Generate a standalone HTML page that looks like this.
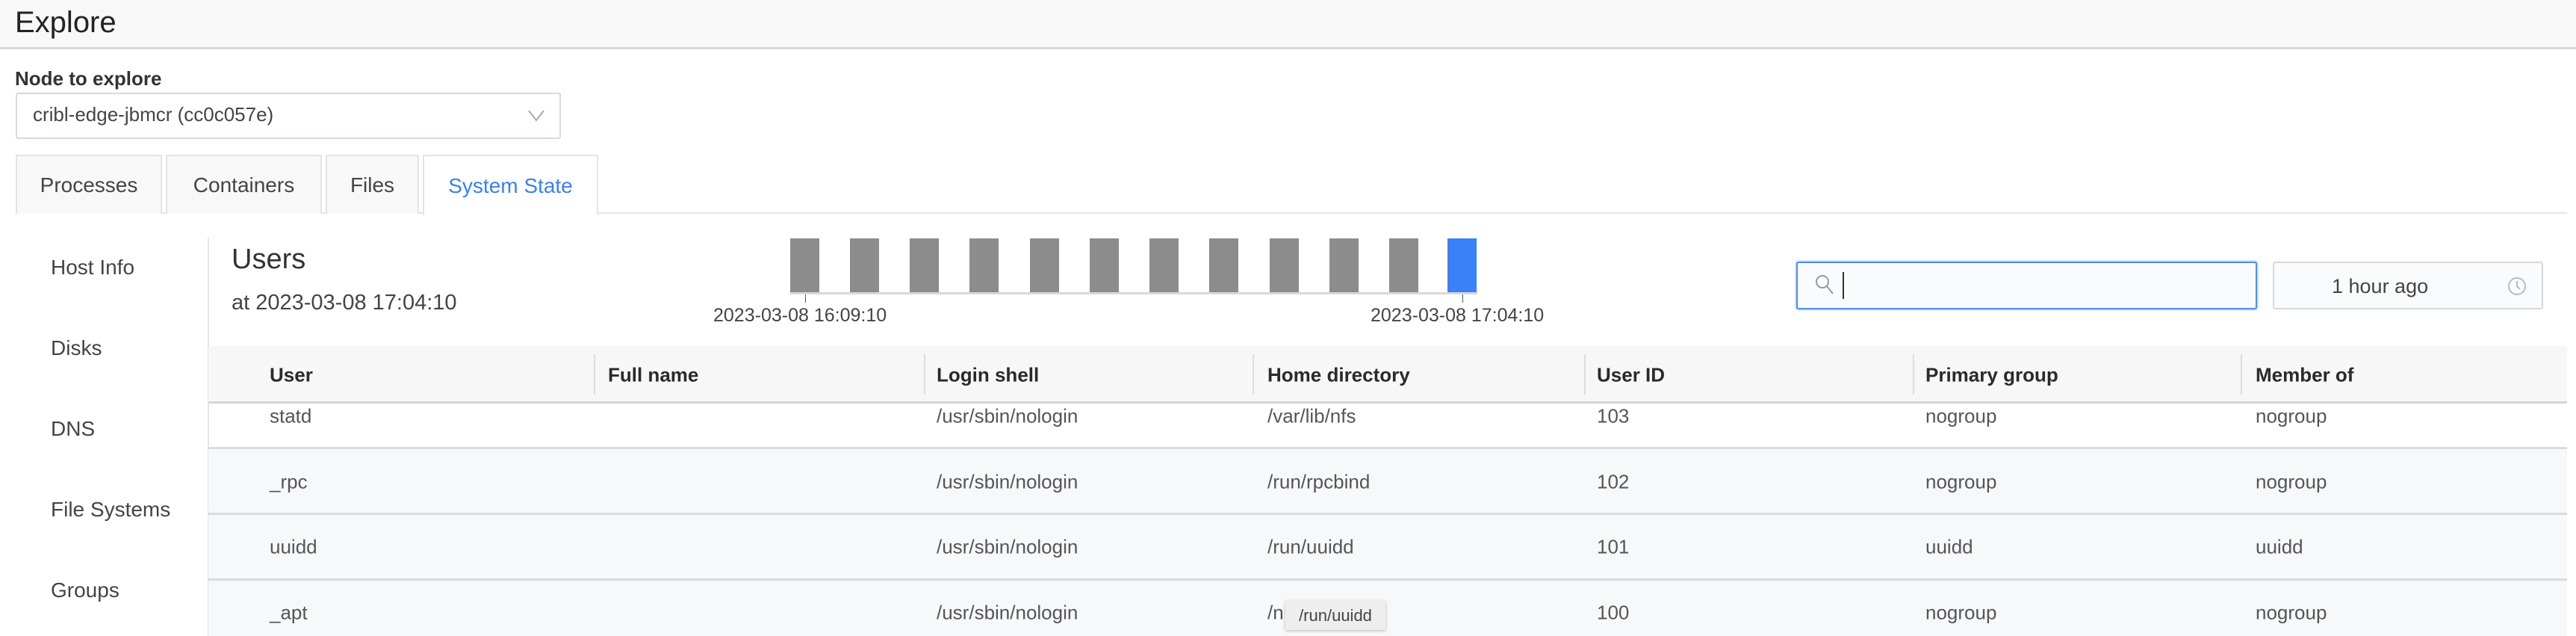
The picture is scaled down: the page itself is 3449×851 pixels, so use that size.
<!DOCTYPE html>
<html><head><meta charset="utf-8"><style>
*{box-sizing:border-box;margin:0;padding:0}
body{width:3449px;height:851px;overflow:hidden;background:#fff;font-family:"Liberation Sans",sans-serif;color:#333;position:relative}
.a{position:absolute;white-space:nowrap}
.tab{position:absolute;top:207px;height:79px;background:#f8f8f8;border:2px solid #e4e4e4;border-bottom:none;font-size:28px;color:#444;display:flex;align-items:center;justify-content:center}
.side{position:absolute;left:68px;font-size:28px;color:#444;transform:translateY(-50%)}
.hd{position:absolute;top:502px;transform:translateY(-50%);font-size:26px;font-weight:bold;color:#2a2a2a}
.sep{position:absolute;top:474px;width:2px;height:54px;background:#ddd}
.c{position:absolute;font-size:26px;color:#555;transform:translateY(-50%)}
.row{position:absolute;left:279px;width:3158px;height:88px;background:#f7f8f9;border-top:3px solid #d5dce2}
.bar{position:absolute;top:319px;width:39px;height:72px;background:#8c8c8c}
</style></head><body>
<div class="a" style="left:0;top:0;width:3449px;height:66px;background:#f8f8f8;border-bottom:3px solid #d3dae0"></div>
<div class="a" style="left:20px;top:8px;font-size:40px;color:#222">Explore</div>
<div class="a" style="left:20px;top:90px;font-size:26px;font-weight:bold;color:#333">Node to explore</div>
<div class="a" style="left:21px;top:124px;width:730px;height:62px;border:2px solid #d3dae0;border-radius:3px"></div>
<div class="a" style="left:44px;top:138px;font-size:26px;color:#444">cribl-edge-jbmcr (cc0c057e)</div>
<svg class="a" style="left:706px;top:146px" width="24" height="18"><path d="M2 2 L12 15 L22 2" fill="none" stroke="#aaa" stroke-width="2"/></svg>

<div class="a" style="left:21px;top:284px;width:3416px;height:2px;background:#e4e4e4"></div>
<div class="tab" style="left:21px;width:196px">Processes</div>
<div class="tab" style="left:222px;width:209px">Containers</div>
<div class="tab" style="left:436px;width:125px">Files</div>
<div class="tab" style="left:566px;width:235px;background:#fff;height:81px;color:#3a80f6">System State</div>

<div class="a" style="left:278px;top:318px;width:2px;height:533px;background:#e4e4e4"></div>
<div class="side" style="top:358px">Host Info</div>
<div class="side" style="top:466px">Disks</div>
<div class="side" style="top:574px">DNS</div>
<div class="side" style="top:682px">File Systems</div>
<div class="side" style="top:790px">Groups</div>

<div class="a" style="left:310px;top:326px;font-size:38px;color:#333">Users</div>
<div class="a" style="left:310px;top:389px;font-size:29px;color:#444">at 2023-03-08 17:04:10</div>

<div class="bar" style="left:1058px"></div><div class="bar" style="left:1138px"></div><div class="bar" style="left:1218px"></div><div class="bar" style="left:1298px"></div><div class="bar" style="left:1379px"></div><div class="bar" style="left:1459px"></div><div class="bar" style="left:1539px"></div><div class="bar" style="left:1619px"></div><div class="bar" style="left:1700px"></div><div class="bar" style="left:1780px"></div><div class="bar" style="left:1860px"></div><div class="bar" style="left:1938px;background:#3a80f6"></div>
<div class="a" style="left:1058px;top:391px;width:920px;height:3px;background:#d9d9d9"></div>
<div class="a" style="left:1078px;top:394px;width:1px;height:11px;background:#555"></div>
<div class="a" style="left:1958px;top:394px;width:1px;height:11px;background:#555"></div>
<div class="a" style="left:955px;top:408px;font-size:25px;color:#444">2023-03-08 16:09:10</div>
<div class="a" style="left:1835px;top:408px;font-size:25px;color:#444">2023-03-08 17:04:10</div>

<div class="a" style="left:2405px;top:350px;width:617px;height:64px;border:2px solid #4a8ef3;border-radius:3px;background:#fafbfc;box-shadow:0 0 0 2px #d6e6fd"></div>
<svg class="a" style="left:2429px;top:366px" width="28" height="30"><circle cx="11" cy="11" r="8" fill="none" stroke="#999" stroke-width="2"/><path d="M17 17 L25 27" stroke="#999" stroke-width="2"/></svg>
<div class="a" style="left:2467px;top:364px;width:2px;height:36px;background:#333"></div>
<div class="a" style="left:3043px;top:350px;width:362px;height:64px;border:2px solid #d3dae0;border-radius:3px;background:#fafbfc"></div>
<div class="a" style="left:3122px;top:368px;font-size:27px;color:#444">1 hour ago</div>
<svg class="a" style="left:3357px;top:368px" width="28" height="30"><circle cx="13" cy="15" r="11" fill="none" stroke="#bbb" stroke-width="2"/><path d="M13 8 V15 L17 19" fill="none" stroke="#bbb" stroke-width="2"/></svg>

<div class="a" style="left:279px;top:463px;width:3158px;height:77px;background:#f7f7f7;border-bottom:3px solid #d5d5d5"></div>
<div class="sep" style="left:795px"></div><div class="sep" style="left:1237px"></div><div class="sep" style="left:1677px"></div><div class="sep" style="left:2121px"></div><div class="sep" style="left:2561px"></div><div class="sep" style="left:3000px"></div>
<div class="hd" style="left:361px">User</div>
<div class="hd" style="left:814px">Full name</div>
<div class="hd" style="left:1254px">Login shell</div>
<div class="hd" style="left:1697px">Home directory</div>
<div class="hd" style="left:2138px">User ID</div>
<div class="hd" style="left:2578px">Primary group</div>
<div class="hd" style="left:3020px">Member of</div>

<div class="row" style="top:598px"></div>
<div class="row" style="top:686px"></div>
<div class="row" style="top:774px;height:77px"></div>

<div class="c" style="left:361px;top:557px">statd</div><div class="c" style="left:1254px;top:557px">/usr/sbin/nologin</div><div class="c" style="left:1697px;top:557px">/var/lib/nfs</div><div class="c" style="left:2138px;top:557px">103</div><div class="c" style="left:2578px;top:557px">nogroup</div><div class="c" style="left:3020px;top:557px">nogroup</div>
<div class="c" style="left:361px;top:645px">_rpc</div><div class="c" style="left:1254px;top:645px">/usr/sbin/nologin</div><div class="c" style="left:1697px;top:645px">/run/rpcbind</div><div class="c" style="left:2138px;top:645px">102</div><div class="c" style="left:2578px;top:645px">nogroup</div><div class="c" style="left:3020px;top:645px">nogroup</div>
<div class="c" style="left:361px;top:732px">uuidd</div><div class="c" style="left:1254px;top:732px">/usr/sbin/nologin</div><div class="c" style="left:1697px;top:732px">/run/uuidd</div><div class="c" style="left:2138px;top:732px">101</div><div class="c" style="left:2578px;top:732px">uuidd</div><div class="c" style="left:3020px;top:732px">uuidd</div>
<div class="c" style="left:361px;top:820px">_apt</div><div class="c" style="left:1254px;top:820px">/usr/sbin/nologin</div><div class="c" style="left:1697px;top:820px">/n</div><div class="c" style="left:2138px;top:820px">100</div><div class="c" style="left:2578px;top:820px">nogroup</div><div class="c" style="left:3020px;top:820px">nogroup</div>
<div class="a" style="left:1721px;top:804px;width:134px;height:39px;background:#eeeeee;box-shadow:0 1px 4px rgba(0,0,0,.25);font-size:22px;color:#444;display:flex;align-items:center;justify-content:center">/run/uuidd</div>
</body></html>
